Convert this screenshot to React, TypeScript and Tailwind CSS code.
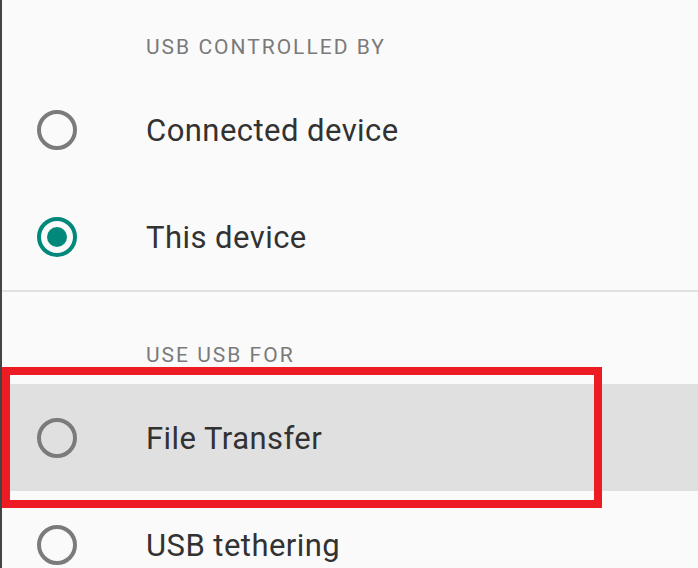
import React from "react";

type Option = { label: string; checked?: boolean; highlighted?: boolean };

const Radio: React.FC<{ checked?: boolean }> = ({ checked }) => (
  <svg width="44" height="44" viewBox="0 0 44 44" className="shrink-0">
    <circle
      cx="22"
      cy="22"
      r="18"
      fill="none"
      stroke={checked ? "#00897b" : "#7b7b7b"}
      strokeWidth="4"
    />
    {checked && <circle cx="22" cy="22" r="10" fill="#00897b" />}
  </svg>
);

const Row: React.FC<Option> = ({ label, checked, highlighted }) => (
  <div
    className={`flex items-center h-[107px] pl-[33px] ${
      highlighted ? "bg-[#e0e0e0]" : ""
    }`}
  >
    <Radio checked={checked} />
    <span className="ml-[67px] pt-[4px] text-[31px] text-[#323232] tracking-[0.45px]">
      {label}
    </span>
  </div>
);

const Header: React.FC<{ label: string; h: string }> = ({ label, h }) => (
  <div className={`flex items-end pl-[144px] ${h}`}>
    <span className="text-[21px] leading-none tracking-[2px] text-[#7a7a7a] pb-[18px]">
      {label}
    </span>
  </div>
);

export default function App() {
  return (
    <div
      className="relative w-[698px] h-[568px] overflow-hidden bg-[#fafafa] border-l-2 border-[#444]"
      style={{ fontFamily: "Roboto, 'Noto Sans', sans-serif" }}
    >
      <Header label="USB CONTROLLED BY" h="h-[76px]" />
      <Row label="Connected device" />
      <Row label="This device" checked />
      <div className="h-[2px] bg-[#e0e0e0] -ml-[2px]" />
      <Header label="USE USB FOR" h="h-[92px]" />
      <Row label="File Transfer" highlighted />
      <Row label="USB tethering" />
      <div className="absolute left-0 top-[367px] w-[600px] h-[141px] border-[8px] border-[#ed1c24]" />
    </div>
  );
}
